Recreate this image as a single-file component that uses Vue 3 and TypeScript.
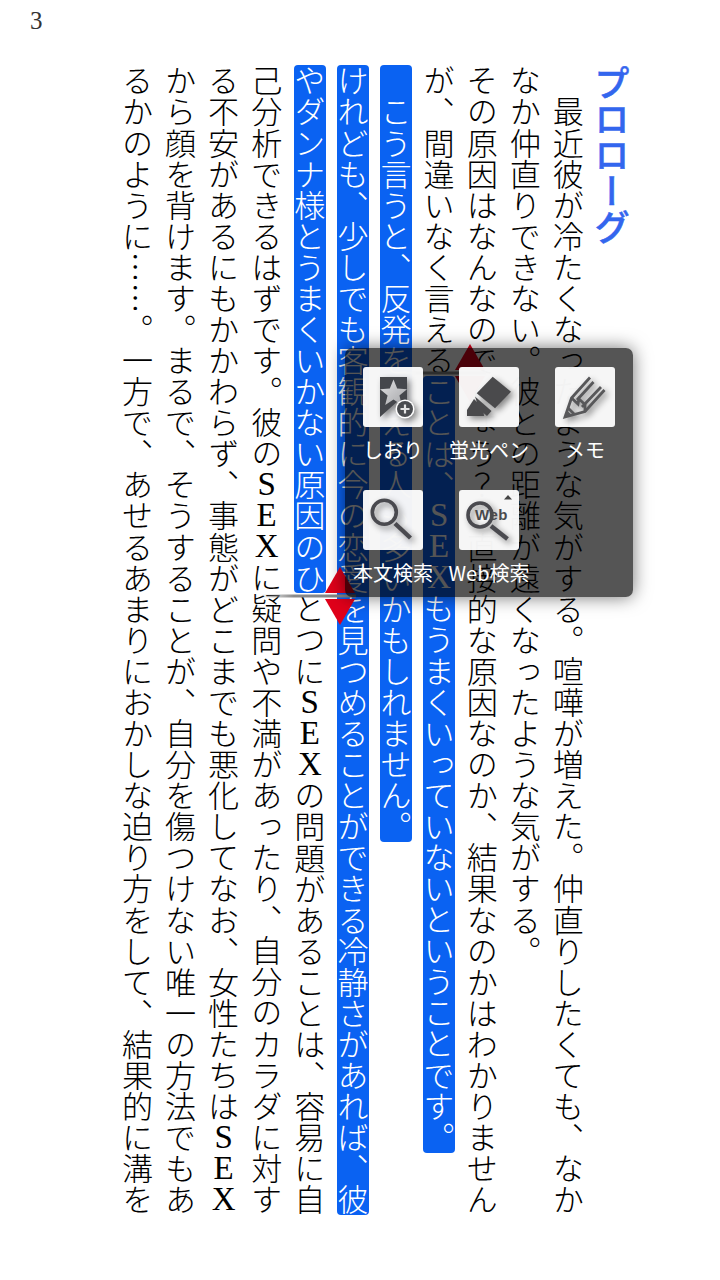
<script setup lang="ts">
interface Line {
  before?: string
  sel?: string
  after?: string
}

const lines: Line[] = [
  { before: '　最近彼が冷たくなったような気がする。喧嘩が増えた。仲直りしたくても、なか' },
  { before: 'なか仲直りできない。彼との距離が遠くなったような気がする。' },
  { before: 'その原因はなんなのでしょう？　直接的な原因なのか、結果なのかはわかりません' },
  { before: 'が、間違いなく言える', sel: 'ことは、SEXもうまくいっていないということです。' },
  { sel: '　こう言うと、反発を覚える人も多いかもしれません。' },
  { sel: 'けれども、少しでも客観的に今の恋愛を見つめることができる冷静さがあれば、彼' },
  { sel: 'やダンナ様とうまくいかない原因のひ', after: 'とつにSEXの問題があることは、容易に自' },
  { before: '己分析できるはずです。彼のSEXに疑問や不満があったり、自分のカラダに対す' },
  { before: 'る不安があるにもかかわらず、事態がどこまでも悪化してなお、女性たちはSEX' },
  { before: 'から顔を背けます。まるで、そうすることが、自分を傷つけない唯一の方法でもあ' },
  { before: 'るかのように……。一方で、あせるあまりにおかしな迫り方をして、結果的に溝を' },
]

const tokens = (text?: string): string[] => (text ? text.split(/([SEX])/).filter(Boolean) : [])
const isLatin = (t: string): boolean => /^[SEX]$/.test(t)
</script>

<template>
  <div class="screen" lang="ja">
    <div class="folio">3</div>

    <div class="page">
      <div class="title">プロローグ</div>
      <div v-for="(line, i) in lines" :key="i" class="line">
        <template v-for="(t, j) in tokens(line.before)" :key="'b' + j">
          <span :class="isLatin(t) ? 'lat' : 'run'">{{ t }}</span>
        </template>
        <span v-if="line.sel" class="sel">
          <template v-for="(t, j) in tokens(line.sel)" :key="'s' + j">
            <span :class="isLatin(t) ? 'lat' : 'run'">{{ t }}</span>
          </template>
        </span>
        <template v-for="(t, j) in tokens(line.after)" :key="'a' + j">
          <span :class="isLatin(t) ? 'lat' : 'run'">{{ t }}</span>
        </template>
      </div>
    </div>

    <svg class="handle handle-start" width="100" height="62" viewBox="0 0 100 62">
      <defs>
        <linearGradient id="hl1" x1="0" x2="1" y1="0" y2="0">
          <stop offset="0" stop-color="#8a8a8a" stop-opacity="0" />
          <stop offset="0.35" stop-color="#8a8a8a" />
          <stop offset="1" stop-color="#808080" />
        </linearGradient>
      </defs>
      <rect x="0" y="29.5" width="96" height="3" fill="url(#hl1)" />
      <polygon points="80,2 65,28 95,28" fill="#e0001a" />
      <polygon points="80,60 65,34 95,34" fill="#e0001a" />
    </svg>
    <svg class="handle handle-end" width="100" height="62" viewBox="0 0 100 62">
      <defs>
        <linearGradient id="hl2" x1="0" x2="1" y1="0" y2="0">
          <stop offset="0" stop-color="#8a8a8a" stop-opacity="0" />
          <stop offset="0.35" stop-color="#8a8a8a" />
          <stop offset="1" stop-color="#808080" />
        </linearGradient>
      </defs>
      <rect x="0" y="29.5" width="96" height="3" fill="url(#hl2)" />
      <polygon points="80,2 65,28 95,28" fill="#e0001a" />
      <polygon points="80,60 65,34 95,34" fill="#e0001a" />
    </svg>

    <div class="panel">
      <div class="item">
        <div class="tile">
          <svg class="icon" viewBox="0 0 60 60" width="60" height="60">
            <defs>
              <linearGradient id="star" x1="0" x2="1" y1="0" y2="1">
                <stop offset="0" stop-color="#e2e2e4" />
                <stop offset="1" stop-color="#a4a5a8" />
              </linearGradient>
            </defs>
            <path d="M17 10 H44 V38 L35 34 L17 50 Z" fill="#45474c" />
            <polygon
              points="30.5,12.5 34.2,21.6 44,22.2 36.4,28.4 38.8,38 30.5,32.6 22.2,38 24.6,28.4 17,22.2 26.8,21.6"
              fill="url(#star)"
            />
            <circle cx="42" cy="42" r="9.5" fill="#fff" />
            <circle cx="42" cy="42" r="8" fill="#4a4c50" />
            <path d="M37.5 42 H46.5 M42 37.5 V46.5" stroke="#e4e4e4" stroke-width="2.2" />
          </svg>
        </div>
        <div class="label">しおり</div>
      </div>
      <div class="item">
        <div class="tile">
          <svg class="icon" viewBox="0 0 60 60" width="60" height="60">
            <polygon points="33.7,9.7 52,24.7 36,41.3 17.7,26.3" fill="#4a4a4c" />
            <polygon points="16,29.5 32.5,44 28,49 20,42" fill="#4a4a4c" />
            <polygon points="15,32 24,41 25,49 8,49 8,43" fill="#4a4a4c" />
          </svg>
        </div>
        <div class="label">蛍光ペン</div>
      </div>
      <div class="item">
        <div class="tile">
          <svg class="icon" viewBox="0 0 60 60" width="60" height="60">
            <g fill="none" stroke="#58585a" stroke-width="2.8" stroke-linejoin="miter">
              <path d="M35 10.5 L16.5 31 L10 50 L30 44.5 L49.5 23" />
              <path d="M38.5 15 L22 33 M46 20 L27 40" />
              <path d="M16.5 31 L23 37 L24 32 L30 37.5 L30 44.5" />
              <path d="M13 41 L19 47" />
            </g>
            <polygon points="10,50 12,43.5 17,48" fill="#58585a" />
          </svg>
        </div>
        <div class="label">メモ</div>
      </div>
      <div class="item">
        <div class="tile">
          <svg class="icon" viewBox="0 0 60 60" width="60" height="60">
            <circle cx="21.3" cy="22.3" r="12" fill="none" stroke="#4a4a4f" stroke-width="3.6" />
            <path d="M32 33.5 L47.5 48" stroke="#4a4a4f" stroke-width="4.4" />
          </svg>
        </div>
        <div class="label">本文検索</div>
      </div>
      <div class="item">
        <div class="tile">
          <svg class="icon icon-plain" viewBox="0 0 60 60" width="60" height="60">
            <g class="shadowed">
              <circle cx="21" cy="25" r="12" fill="none" stroke="#4a4a4f" stroke-width="3.6" />
              <path d="M32 36 L48.5 49" stroke="#4a4a4f" stroke-width="4.4" />
            </g>
            <text x="32.5" y="29.5" text-anchor="middle" class="web-text">Web</text>
            <polygon points="45,9.5 53,9.5 49,5" fill="#444" />
          </svg>
        </div>
        <div class="label">Web検索</div>
      </div>
    </div>
  </div>
</template>

<style scoped>
.screen {
  position: relative;
  width: 720px;
  height: 1280px;
  overflow: hidden;
  background: #fff;
  color: #000;
  font-family: "Noto Sans CJK JP", sans-serif;
}
.folio {
  position: absolute;
  left: 30px;
  top: 6px;
  font-family: "Liberation Serif", serif;
  font-size: 25px;
  line-height: 30px;
  color: #333;
}
.page {
  writing-mode: vertical-rl;
  box-sizing: border-box;
  width: 720px;
  height: 1280px;
  padding-top: 65px;
  padding-right: 87px;
  font-size: 31.08px;
  font-weight: 300;
  white-space: nowrap;
  text-spacing-trim: space-all;
}
.line {
  display: flex;
  align-items: center;
  block-size: 43.1px;
  line-height: 43.1px;
}
.title {
  line-height: 43.1px;
  block-size: 43.1px;
  font-size: 36px;
  font-weight: 500;
  -webkit-text-stroke: 0.5px #3366ee;
  color: #3366ee;
}
.run {
  display: block;
  white-space: pre;
}
.sel {
  display: flex;
  align-items: center;
  block-size: 31.5px;
  background: #0a62f2;
  color: #fff;
  border-radius: 4px;
}
.lat {
  display: block;
  flex: none;
  writing-mode: horizontal-tb;
  width: 31px;
  height: 31.08px;
  line-height: 31.08px;
  text-align: center;
  font-family: "Liberation Serif", serif;
  font-size: 33px;
  font-weight: 400;
}
.handle {
  position: absolute;
}
.handle-start {
  left: 390px;
  top: 342px;
}
.handle-end {
  left: 260px;
  top: 565px;
}
.panel {
  position: absolute;
  left: 345px;
  top: 348px;
  box-sizing: border-box;
  width: 288px;
  height: 249px;
  padding-top: 19px;
  border-radius: 7px;
  background: rgba(0, 0, 0, 0.667);
  box-shadow: 0 0 18px rgba(0, 0, 0, 0.55);
  display: grid;
  grid-template-columns: repeat(3, 96px);
  grid-auto-rows: 95px;
  row-gap: 28px;
}
.item {
  display: flex;
  flex-direction: column;
  align-items: center;
}
.tile {
  width: 60px;
  height: 60px;
  border-radius: 3px;
  background: rgba(255, 255, 255, 0.95);
}
.icon {
  display: block;
  filter: drop-shadow(3px 3px 3px rgba(0, 0, 0, 0.45));
}
.icon-plain {
  filter: none;
}
.shadowed {
  filter: drop-shadow(3px 3px 3px rgba(0, 0, 0, 0.45));
}
.web-text {
  font-family: "Liberation Sans", sans-serif;
  font-size: 15px;
  font-weight: 700;
  letter-spacing: 0.5px;
  fill: #4a4a4c;
}
.label {
  margin-top: 11px;
  font-size: 20px;
  line-height: 24px;
  color: #fff;
  white-space: nowrap;
}
</style>
